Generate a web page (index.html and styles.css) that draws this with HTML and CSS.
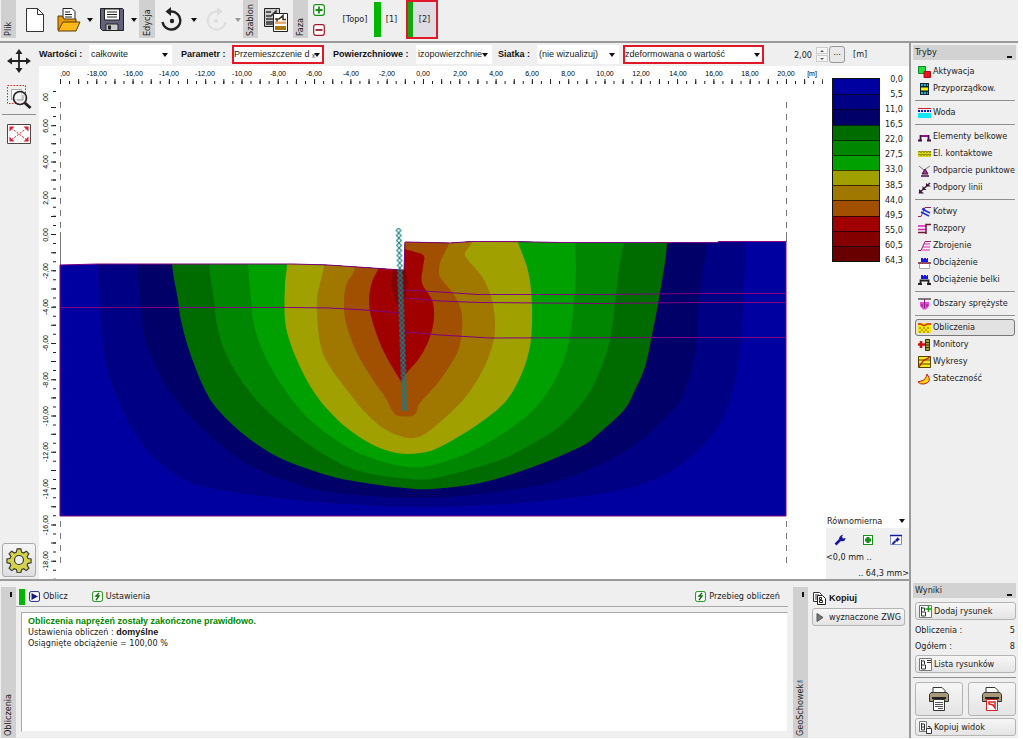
FILE: index.html
```html
<!DOCTYPE html>
<html lang="pl">
<head>
<meta charset="utf-8">
<title>Analiza MES</title>
<link rel="stylesheet" href="styles.css">
</head>
<body>
<div class="app">
  <header class="topbar">
    <div class="strip">Plik</div>
    <button class="tool w38" aria-label="Nowy"><svg width="20" height="26" viewBox="0 0 20 26"><path d="M1.500 1.500h11l6 6v17h-17z" fill="#fff" stroke="#333"/><path d="M12.500 1.500v6h6" fill="none" stroke="#333"/></svg></button>
    <button class="tool w30" aria-label="Otwórz"><svg width="26" height="26" viewBox="0 0 26 26"><path d="M7 12V1.500h9l3 3V14z" fill="#fff" stroke="#222"/><path d="M9 5h5M9 7.500h7M9 10h7" stroke="#222"/><path d="M2 23V9h4l2 3h12v3" fill="#e89a00" stroke="#5a3a00"/><path d="M2 24l5-9h17l-4 9z" fill="#ffb818" stroke="#5a3a00"/></svg></button>
    <button class="arrow" aria-label="Otwórz – lista"></button>
    <button class="tool w33" aria-label="Zapisz"><svg width="26" height="26" viewBox="0 0 26 26"><path d="M1.500 1.500h22l1 1v21h-21l-2-2z" fill="#62627c" stroke="#20202c"/><path d="M5.500 2h15v11h-15z" fill="#fff" stroke="#222"/><path d="M8 5h10M8 7.500h10M8 10h10" stroke="#222"/><path d="M7 17h12v6.500H7z" fill="#ccc" stroke="#222"/><path d="M9 18.500h3v4H9z" fill="#222"/></svg></button>
    <button class="arrow" aria-label="Zapisz – lista"></button>
    <div class="strip wide">Edycja</div>
    <button class="tool w33" aria-label="Cofnij"><svg width="24" height="26" viewBox="0 0 24 26"><path d="M2.500 15a9 9 0 1 0 9-10.500H8" fill="none" stroke="#222" stroke-width="2.400"/><path d="M11 0v9L5.500 4.500z" fill="#222"/><circle cx="12" cy="14" r="2.200" fill="#222"/></svg></button>
    <button class="arrow" aria-label="Cofnij – lista"></button>
    <button class="tool w33" aria-label="Ponów" disabled><svg width="24" height="26" viewBox="0 0 24 26"><path d="M21.500 15a9 9 0 1 1-9-10.500H16" fill="none" stroke="#ddd" stroke-width="2"/><path d="M13 0v9l5.500-4.500z" fill="#ddd"/><circle cx="12" cy="14" r="2" fill="#ddd"/></svg></button>
    <button class="arrow dim" aria-label="Ponów – lista"></button>
    <div class="strip">Szablon</div>
    <button class="tool w35" aria-label="Szablon"><svg width="26" height="26" viewBox="0 0 26 26"><path d="M1.500 1.500h15v18h-15z" fill="#ccc" stroke="#222"/><path d="M3 5h5M3 9h5l5-5v5M3 12h7M3 15h7M3 17h7" fill="none" stroke="#333" stroke-width="1.500"/><path d="M10.500 6.500h14v18h-14z" fill="#fff" stroke="#222"/><path d="M12 12h4l4-3.500v4h3M14 15v-3" fill="none" stroke="#432" stroke-width="1.500"/><path d="M12 14.500h11v2.500H12z" fill="#e8a870"/><path d="M12 19h11v4H12z" fill="#a87810"/></svg></button>
    <div class="strip">Faza</div>
    <div class="phase-edit">
      <button class="mini" aria-label="Dodaj fazę"><svg width="12" height="12" viewBox="0 0 12 12"><rect x=".7" y=".7" width="10.600" height="10.600" rx="2" fill="#fff" stroke="#169016" stroke-width="1.200"/><path d="M6 2.500v7M2.500 6h7" stroke="#169016" stroke-width="1.800"/></svg></button>
      <button class="mini" aria-label="Usuń fazę"><svg width="12" height="12" viewBox="0 0 12 12"><rect x=".7" y=".7" width="10.600" height="10.600" rx="2" fill="#fff" stroke="#a01828" stroke-width="1.200"/><path d="M2.500 6h7" stroke="#a01828" stroke-width="1.800"/></svg></button>
    </div>
    <button class="phase topo">[Topo]</button>
    <button class="phase one">[1]</button>
    <button class="phase two">[2]</button>
  </header>

  <div class="left">
    <section class="work">
      <nav class="tools">
        <button class="tbtn" aria-label="Przesuń"><svg width="26" height="26" viewBox="0 0 26 26"><path d="M13 3v20M3 13h20" stroke="#222" stroke-width="1.800"/><path d="M13 1l3.500 5h-7zM13 25l3.500-5h-7zM1 13l5-3.500v7zM25 13l-5-3.500v7z" fill="#222"/></svg></button>
        <button class="tbtn zoom" aria-label="Powiększ"><svg width="26" height="26" viewBox="0 0 26 26"><path d="M1.500 1.500h18v18h-18z" fill="none" stroke="#e02020" stroke-dasharray="1.500 1.500"/><path d="M5.500 5.500h10v10h-10z" fill="#fff" stroke="#aaa"/><circle cx="14" cy="14" r="6.500" fill="#eee" fill-opacity=".7" stroke="#222" stroke-width="1.600"/><path d="M11 16h6v-5" fill="none" stroke="#999"/><path d="M19 19l5.500 5" stroke="#222" stroke-width="3"/></svg></button>
        <hr>
        <button class="tbtn" aria-label="Pokaż wszystko"><svg width="26" height="22" viewBox="0 0 26 22"><path d="M1.500 1.500h23v19h-23z" fill="#fff" stroke="#554444"/><path d="M5 5l16 12M21 5L5 17" stroke="#e02030" stroke-dasharray="2 1.500"/><path d="M3.500 3.500h5l-5 5zM22.500 3.500h-5l5 5zM3.500 18.500h5l-5-5zM22.500 18.500h-5l5-5z" fill="#e02030"/></svg></button>
        <button class="gear" aria-label="Ustawienia widoku"><svg width="26" height="26" viewBox="-14 -14 28 28"><path d="M-2-12h4l.8 3.500 2.200 1 2.900-2 2.800 2.800-2 2.800 1 2.300 3.300.6v4l-3.300.6-1 2.200 2 2.900-2.800 2.700-2.900-2-2.200.9-.8 3.400h-4l-.8-3.400-2.200-.9-2.900 2-2.800-2.700 2-2.900-1-2.200L-13 3v-4l3.300-.6 1-2.300-2-2.800 2.800-2.800 2.900 2 2.200-1z" fill="#d4d44c" stroke="#333" stroke-width="1.200"/><circle r="4.800" fill="#eee" stroke="#333" stroke-width="1.200"/></svg></button>
      </nav>

      <div class="options">
        <label for="o1">Wartości :</label>
        <span class="sel"><select id="o1"><option>całkowite</option></select></span>
        <label for="o2">Parametr :</label>
        <span class="sel hot"><select id="o2"><option>Przemieszczenie d ₓ</option></select></span>
        <label for="o3">Powierzchniowe :</label>
        <span class="sel"><select id="o3"><option>izopowierzchnie</option></select></span>
        <label class="near" for="o4">Siatka :</label>
        <span class="sel"><select id="o4"><option>(nie wizualizuj)</option></select></span>
        <span class="sel hot deform"><select id="o5" aria-label="Deformacja"><option>zdeformowana o wartość</option></select></span>
        <input class="num" value="2,00" aria-label="Wartość">
        <span class="spin"><button aria-label="Więcej"></button><button aria-label="Mniej" class="down"></button></span>
        <button class="more">...</button>
        <span class="unit">[m]</span>
      </div>

      <svg class="plot" viewBox="39 66 784 513" preserveAspectRatio="xMinYMin meet" role="img" aria-label="Przemieszczenie dx">
        <defs>
          <clipPath id="soil"><path id="ground" d="M60 265L98 264H293L328 265 365 267.500 401 270 404 270 405 242 450 243 472 241.500 508 241.500 560 242.500 717 242.500 719 241.500 786 241.500V516H60z"/></clipPath>
          <clipPath id="cx"><path d="M60 66h763v16H60z"/></clipPath>
          <clipPath id="cy"><path d="M39 93h16v9H39zM39 112h16v460H39z"/></clipPath>
          <pattern id="links" width="6" height="5" patternUnits="userSpaceOnUse" x="395.500" y="228"><path d="M3 0L5.500 2.500 3 5 .5 2.500z" fill="none" stroke="#108484" stroke-width="1"/></pattern>
        </defs>
        <path class="bg" d="M39 66h784v513H39z"/>
        <g class="ticks">
          <path d="M60 81.500H823" stroke-width="5" stroke-dasharray="1 17.150"/>
          <path d="M69 82.500H823" stroke-width="3" stroke-dasharray="1 8.075"/>
          <path d="M53.500 107V579" stroke-width="5" stroke-dasharray="1 17.150"/>
          <path d="M54.500 116V579" stroke-width="3" stroke-dasharray="1 8.075"/>
          <path d="M53 91.500h3"/>
        </g>
        <g class="num-x" clip-path="url(#cx)">
          <text x="60" y="76">-20,00</text><text x="97" y="76">-18,00</text><text x="133" y="76">-16,00</text><text x="169" y="76">-14,00</text><text x="205" y="76">-12,00</text><text x="242" y="76">-10,00</text><text x="278" y="76">-8,00</text><text x="314" y="76">-6,00</text><text x="351" y="76">-4,00</text><text x="387" y="76">-2,00</text><text x="423" y="76">0,00</text><text x="460" y="76">2,00</text><text x="496" y="76">4,00</text><text x="532" y="76">6,00</text><text x="568" y="76">8,00</text><text x="605" y="76">10,00</text><text x="641" y="76">12,00</text><text x="678" y="76">14,00</text><text x="714" y="76">16,00</text><text x="750" y="76">18,00</text><text x="786" y="76">20,00</text><text x="812" y="76">[m]</text>
        </g>
        <g clip-path="url(#cy)"><g class="num-y" transform="rotate(-90)">
          <text x="-100" y="48">8,00</text><text x="-126" y="48">6,00</text><text x="-162" y="48">4,00</text><text x="-198" y="48">2,00</text><text x="-235" y="48">0,00</text><text x="-271" y="48">-2,00</text><text x="-307" y="48">-4,00</text><text x="-343" y="48">-6,00</text><text x="-380" y="48">-8,00</text><text x="-416" y="48">-10,00</text><text x="-452" y="48">-12,00</text><text x="-489" y="48">-14,00</text><text x="-525" y="48">-16,00</text><text x="-561" y="48">-18,00</text>
        </g></g>
        <path class="edge" d="M60.500 102V232M786.500 102V232M60.500 521V566M786.500 521V566" stroke-dasharray="6 6"/>
        <path class="edge" d="M60.500 232V265M786.500 232V242"/>
        <g clip-path="url(#soil)">
          <path fill="#0000a0" d="M60 230h726v286H60z"/>
          <g id="bands"></g>
          <path fill="#840000" d="M393 268L391 285 397 305 404 300 408 285 406 270z"/>
        </g>
        <path class="line" d="M60 307.500H293L330 308 365 310 400 313M403 290L440 292 478 294.500H603L700 293.500H786M406 298L440 301 480 302.500 600 303.500 696 302.500H786M404 332L440 335 490 338 680 337.500H786"/>
        <use href="#ground" class="line"/>
        <path d="M397 270h6l4 140h-5z" fill="#3c5a80" fill-opacity=".35"/>
        <g transform="translate(-8 0) skewX(2)"><path d="M395.500 228h6v183h-6z" fill="url(#links)"/></g>
      </svg>

      <aside class="legend">
        <div class="scale">
          <div class="swatches"><i class="c1"></i><i class="c2"></i><i class="c3"></i><i class="c4"></i><i class="c5"></i><i class="c6"></i><i class="c7"></i><i class="c8"></i><i class="c9"></i><i class="c10"></i><i class="c11"></i><i class="c12"></i></div>
          <div class="values"><span>0,0</span><span>5,5</span><span>11,0</span><span>16,5</span><span>22,0</span><span>27,5</span><span>33,0</span><span>38,5</span><span>44,0</span><span>49,5</span><span>55,0</span><span>60,5</span><span>64,3</span></div>
        </div>
        <div class="range">
          <span class="sel"><select aria-label="Skala"><option>Równomierna</option></select></span>
          <div class="range-icons">
            <button class="mini" aria-label="Edytuj"><svg width="12" height="12" viewBox="0 0 12 12"><path d="M1.500 10.500l5-5" stroke="#1818a0" stroke-width="2.600"/><path d="M5 5Q5 2 9 .5L8 3l1 1.500 2.500-.5Q11 8 7 7z" fill="#1818a0"/></svg></button>
            <button class="mini" aria-label="Dodaj"><svg width="12" height="12" viewBox="0 0 12 12"><rect x="1.500" y="1.500" width="9" height="9" fill="#fff" stroke="#169016"/><path d="M6 3v6M3 6h6" stroke="#169016" stroke-width="3"/></svg></button>
            <button class="mini" aria-label="Opcje skali"><svg width="12" height="12" viewBox="0 0 12 12"><path d="M.5 1.500h11v9H.5z" fill="#fff" stroke="#8090d0"/><path d="M0 1.500h12" stroke="#1818a0" stroke-width="1.500"/><path d="M2.500 10l3-3" stroke="#1818a0" stroke-width="2"/><path d="M5 6l3-3 .5 1.500L10 5 7 8z" fill="#1818a0"/></svg></button>
          </div>
          <div>&lt;0,0 mm ..</div>
          <div class="to">.. 64,3 mm&gt;</div>
        </div>
      </aside>
    </section>

    <section class="bottom">
      <div class="strip tall"><b class="pin"></b>Obliczenia</div>
      <div class="calc">
        <div class="calc-bar">
          <span class="mark"></span>
          <button class="flat"><svg width="11" height="11" viewBox="0 0 11 11"><rect x=".6" y=".6" width="9.800" height="9.800" rx="1.500" fill="#fff" stroke="#202080"/><path d="M2.500 2l6.500 3.500L2.500 9z" fill="#181880"/></svg>Oblicz</button>
          <button class="flat second"><svg width="11" height="11" viewBox="0 0 11 11"><rect x=".6" y=".6" width="9.800" height="9.800" rx="1.500" fill="#fff" stroke="#169016"/><path d="M7 2L4 5h3L4 9" fill="none" stroke="#107010" stroke-width="1.400"/></svg>Ustawienia</button>
          <button class="flat last"><svg width="11" height="11" viewBox="0 0 11 11"><rect x=".6" y=".6" width="9.800" height="9.800" rx="1.500" fill="#fff" stroke="#169016"/><path d="M7 2L4 5h3L4 9" fill="none" stroke="#107010" stroke-width="1.400"/></svg>Przebieg obliczeń</button>
        </div>
        <div class="log">
          <p class="ok">Obliczenia naprężeń zostały zakończone prawidłowo.</p>
          <p>Ustawienia obliczeń : <b>domyślne</b></p>
          <p>Osiągnięte obciążenie = 100,00 %</p>
        </div>
      </div>
      <div class="strip tall"><b class="pin"></b>GeoSchowek™</div>
      <div class="clip">
        <div class="clip-title"><svg width="13" height="13" viewBox="0 0 13 13"><path d="M.5.5h6l2 2v7h-8z" fill="#fff" stroke="#333"/><path d="M2 3h4M2 5h4M2 7h4" stroke="#333"/><path d="M4.500 3.500h5l3 3v6h-8z" fill="#fff" stroke="#222"/><path d="M6.500 5.500h2v2h-2zM6.500 8.500h3v2h-3z" fill="none" stroke="#222"/></svg><b>Kopiuj</b></div>
        <button class="btn"><svg width="8" height="9" viewBox="0 0 8 9"><path d="M1 .5l6 4-6 4z" fill="#777" stroke="#555"/></svg>wyznaczone ZWG</button>
      </div>
    </section>
  </div>

  <aside class="side">
    <h2>Tryby<i></i></h2>
    <nav class="modes">
      <button><svg viewBox="0 0 13 12"><path d="M.5.500h7v7h-7z" fill="#20e040" stroke="#118822"/><path d="M6 5.500h6.500v6H6z" fill="#f01020" stroke="#a01010"/></svg>Aktywacja</button>
      <button><svg viewBox="0 0 13 12"><path d="M2 0h9v12H2z" fill="#123"/><path d="M3 1h7v2H3zM3 9h7v2H3z" fill="#20b8c0"/><path d="M5 1h1v2H5zM8 1h1v2H8zM5 9h1v2H5zM8 9h1v2H8z" fill="#123"/><path d="M3 4.500h7v3H3z" fill="#f8f000"/></svg>Przyporządkow.</button>
      <hr>
      <button><svg viewBox="0 0 13 12"><path d="M0 1.500h13" stroke="#d02020"/><path d="M0 4h13" stroke="#1010d0" stroke-width="2" stroke-dasharray="2 1"/><path d="M0 6h13v5H0z" fill="#10e8f8"/></svg>Woda</button>
      <hr>
      <button><svg viewBox="0 0 13 12"><path d="M2.500 9.500V5h8v4.500M0 9.500h4M9 9.500h4" fill="none" stroke="#401040" stroke-width="1.800"/><path d="M3 5h7" stroke="#901090" stroke-width="2"/></svg>Elementy belkowe</button>
      <button><svg viewBox="0 0 13 12"><path d="M0 3h13v6H0z" fill="#d8d820"/><path d="M0 4.500l1.500-1.500L3 4.500 4.500 3 6 4.500 7.500 3 9 4.500 10.500 3 12 4.500 13 3M0 7.500L1.500 6 3 7.500 4.500 6 6 7.500 7.500 6 9 7.500 10.500 6 12 7.500 13 6" fill="none" stroke="#666600"/></svg>El. kontaktowe</button>
      <button><svg viewBox="0 0 13 12"><path d="M1 1l5 4 6-4" fill="none" stroke="#777"/><path d="M7 4l3 5H4z" fill="#b030a0" stroke="#401040"/><path d="M3 11h8" stroke="#401040" stroke-width="1.500"/></svg>Podparcie punktowe</button>
      <button><svg viewBox="0 0 13 12"><path d="M1 11L12 1" stroke="#402040" stroke-width="1.500"/><path d="M1 7l5 4.500H1zM4.500 4l4 4h-4zM8 1l5 3.500H8z" fill="#401838"/></svg>Podpory linii</button>
      <hr>
      <button><svg viewBox="0 0 13 12"><path d="M0 10.500h3L7 1.500h6" fill="none" stroke="#902060"/><path d="M4 3l8 4M3 6l8 4M5 2l3 3" stroke="#2030d8" stroke-width="1.400"/></svg>Kotwy</button>
      <button><svg viewBox="0 0 13 12"><path d="M0 3h8M0 6.500h8" stroke="#e018c0" stroke-width="1.500"/><path d="M0 9.500h8M8 11V1.500h5" fill="none" stroke="#701830" stroke-width="1.500"/></svg>Rozpory</button>
      <button><svg viewBox="0 0 13 12"><path d="M0 10.500h3L7 1.500h6" fill="none" stroke="#902060"/><path d="M6 4h6M5 7h7M4 10h8" stroke="#e020c0" stroke-width="1.200"/></svg>Zbrojenie</button>
      <button><svg viewBox="0 0 13 12"><path d="M3 1h2v1h1V1h2v1h1V1h1v4H3z" fill="#1818e0"/><path d="M0 6h13" stroke="#701830" stroke-width="1.500"/><path d="M1.500 7v4.500h10V7" fill="#fff" stroke="#aaa"/></svg>Obciążenie</button>
      <button><svg viewBox="0 0 13 12"><path d="M3 1h2v1h1V1h2v1h1V1h1v4H3z" fill="#1818e0"/><path d="M2.500 10V6.500h8V10M0 10h4M9 10h4" fill="none" stroke="#222" stroke-width="1.800"/></svg>Obciążenie belki</button>
      <hr>
      <button><svg viewBox="0 0 13 12"><path d="M0 1h13" stroke="#555" stroke-width="1.500"/><path d="M2 4h9v4l-3 3.500H5L2 8z" fill="#e848d8"/><path d="M6.500 1v9M4 6v3M9 6v3" stroke="#802080"/></svg>Obszary sprężyste</button>
      <hr>
      <button class="on"><svg viewBox="0 0 13 12"><path d="M0 1h13v10H0z" fill="#f8e800"/><path d="M0 2h3q3 3 6 0h4" fill="none" stroke="#d02020" stroke-width="1.300"/><path d="M1 6h2M5 6h2M9 6h2M3 8h2M7 8h2M1 10h2M5 10h2M9 10h2" stroke="#806000"/></svg>Obliczenia</button>
      <button><svg viewBox="0 0 13 12"><path d="M3 2v7M0 5.500h7" stroke="#c81010" stroke-width="2.600"/><path d="M7.500.5h4v11h-4z" fill="#a8a020" stroke="#333300"/><path d="M8 3.500h3M8 6h3M8 8.500h3" stroke="#333300"/></svg>Monitory</button>
      <button><svg viewBox="0 0 13 12"><path d="M.5.500h12v11H.5z" fill="#f8e820" stroke="#554400"/><path d="M1 4h11M1 8h11" stroke="#554400"/><path d="M1 11l4-6 7-4" fill="none" stroke="#d01010" stroke-width="1.300"/></svg>Wykresy</button>
      <button><svg viewBox="0 0 13 12"><path d="M0 9l3-1q5-1 6-7 6 8-3 10-4 .5-6-2z" fill="#f8d810" stroke="#c81818"/></svg>Stateczność</button>
    </nav>
    <section class="results">
      <h2>Wyniki<i></i></h2>
      <button class="btn"><svg width="13" height="13" viewBox="0 0 13 13"><path d="M.5.500h12v12H.5z" fill="#fff" stroke="#777"/><path d="M2.500 2v9h4V7h-4M2.500 3h3v3" fill="none" stroke="#333"/><path d="M9.500 1v6M6.500 4h6" stroke="#10a010" stroke-width="1.600"/></svg>Dodaj rysunek</button>
      <div class="count"><span>Obliczenia :</span><span>5</span></div>
      <div class="count"><span>Ogółem :</span><span>8</span></div>
      <button class="btn"><svg width="13" height="13" viewBox="0 0 13 13"><path d="M.5.500h12v12H.5z" fill="#fff" stroke="#777"/><path d="M2.500 2v9h4V7h-4M2.500 3h3v3M8 2.500h4M8 4.500h4" fill="none" stroke="#333"/></svg>Lista rysunków</button>
      <hr>
      <div class="printers">
        <button class="btn" aria-label="Drukuj"><svg width="22" height="26" viewBox="0 0 22 26"><path d="M5 8V1.500h9l3 3V8" fill="#fff" stroke="#333"/><path d="M3 6.500h16l1.500 2v7h-19v-7z" fill="#a89878" stroke="#333"/><path d="M4 12h14" stroke="#222" stroke-width="2"/><path d="M5.500 13.500h11v11h-11z" fill="#fff" stroke="#333"/><path d="M7 16.500h8M7 18.500h8M7 20.500h8M10 22.500h5" stroke="#555"/></svg></button>
        <button class="btn" aria-label="Drukuj do PDF"><svg width="22" height="26" viewBox="0 0 22 26"><path d="M5 8V1.500h9l3 3V8" fill="#fff" stroke="#333"/><path d="M3 6.500h16l1.500 2v7h-19v-7z" fill="#a89878" stroke="#333"/><path d="M4 12h14" stroke="#222" stroke-width="2"/><path d="M5.500 13.500h11v11h-11z" fill="#fff" stroke="#d02020"/><path d="M8 16h6v6l-2-3-4-1z" fill="none" stroke="#e02020" stroke-width="1.500"/></svg></button>
      </div>
      <button class="btn"><svg width="13" height="13" viewBox="0 0 13 13"><path d="M.5.500h7v10h-7z" fill="#fff" stroke="#777"/><path d="M2.500 2v7h3V6h-3M2.500 3h3v3" fill="none" stroke="#333"/><path d="M7.500 7.500h5v5h-5zM9 5.500h2v2" fill="#fff" stroke="#333"/></svg>Kopiuj widok</button>
    </section>
  </aside>
</div>
<script src="bands.js"></script>
</body>
</html>
```
FILE: bands.js
```javascript
// Isosurface outlines, from the outer band to the inner one: colour and the points of the boundary.
const bands = [
  ["#000084", "98,230 98,264 101,320 106,365 117,397 133,430 157,460 197,485 270,497 330,503 410,507 490,505 560,499 633,487 683,463 718,427 733,390 741,340 743,300 746,242 746,230"],
  ["#000068", "137,230 137,264 140,300 143,330 153,360 172,395 206,432 247,464 290,482 330,492 410,498 480,494 560,480 622,453 657,426 682,397 695,353 698,310 702,280 707,242 707,230"],
  ["#006c00", "172,230 172,264 178,300 181,320 189,350 205,390 220,412 247,437 280,458 330,476 372,484 405,488 430,489 480,483 530,468 580,447 597,435 624,410 635,390 645,367 651,340 658,304 665,262 667,242 667,230"],
  ["#008600", "209,230 209,264 214,300 217,325 226,354 243,383 265,409 297,436 330,458 363,472 410,479 440,477 497,461 530,445 560,426 585,399 600,371 610,340 615,303 620,263 624,242 624,230"],
  ["#00a000", "248,230 248,264 251,300 254,325 264,354 283,387 304,414 330,436 363,455 407,467 440,463 480,447 522,420 547,393 562,365 570,336 574,300 576,270 575,242 575,230"],
  ["#a0a000", "287,230 287,264 285,285 285,320 291,345 303,373 316,395 330,412 347,428 373,445 397,453 420,453 440,447 477,425 506,401 522,373 530,346 532,320 531,290 527,267 518,242 518,230"],
  ["#a07800", "324,230 324,265 317,300 320,343 330,367 347,390 363,410 383,428 403,437 418,437 433,428 463,400 483,370 493,343 495,323 492,300 483,278 468,260 465,253 472,242 472,230"],
  ["#a05000", "355,230 355,267 347,283 344,300 346,323 357,353 373,380 385,397 393,412 399,416 412,416 417,411 420,403 440,380 457,353 462,330 461,310 453,293 440,277 440,263 445,252 449,243 449,230"],
  ["#a00000", "378,260 378,269 372,282 369,300 372,320 383,350 400,380 402,382 405,375 420,357 430,337 434,317 432,300 422,283 423,267 424,256 415,252 404,249 403,249 401,260"]
];

// A Catmull-Rom curve through the points, written as cubic Béziers.
function smooth(text) {
  const p = text.split(" ").map(s => s.split(",").map(Number));
  let d = "M" + p[0];
  for (let i = 0; i < p.length - 1; i++) {
    const a = p[Math.max(i - 1, 0)], b = p[i], c = p[i + 1], e = p[Math.min(i + 2, p.length - 1)];
    d += "C" + [b[0] + (c[0] - a[0]) / 6, b[1] + (c[1] - a[1]) / 6,
      c[0] - (e[0] - b[0]) / 6, c[1] - (e[1] - b[1]) / 6, c[0], c[1]];
  }
  return d + "Z";
}

for (const [fill, points] of bands) {
  const path = document.createElementNS("http://www.w3.org/2000/svg", "path");
  path.setAttribute("fill", fill);
  path.setAttribute("d", smooth(points));
  document.getElementById("bands").append(path);
}
```
FILE: styles.css
```css
* { box-sizing: border-box; }
body {
  margin: 0;
  background: #fff;
  color: #222;
  font: 9px/11px "DejaVu Sans Condensed", "Liberation Sans", sans-serif;
}
button, select, input { font: inherit; color: inherit; margin: 0; padding: 0; border: 0; border-radius: 0; background: none; }
button { display: flex; align-items: center; justify-content: center; white-space: nowrap; }
svg { display: block; flex: none; }
b, label { font-family: "Liberation Sans", sans-serif; font-weight: bold; color: #111; }
p, h2 { margin: 0; font-size: inherit; font-weight: normal; }
hr { width: 100%; height: 1px; margin: 0; border: 0; background: #909090; }

.app {
  display: grid;
  grid-template: 43px 1fr / 1fr 109px;
  height: 100vh;
  padding: 0 5px 1px 0;
}
.topbar {
  grid-column: 1 / -1;
  display: flex;
  align-items: stretch;
  padding: 0 0 2px 1px;
  background: #efefef;
  border-bottom: 2px solid #9a9a9a;
}
.strip {
  display: flex;
  align-items: center;
  width: 15px;
  height: 38px;
  background: #d0d0d0;
  writing-mode: vertical-rl;
  transform: rotate(180deg);
  padding: 2px 0;
  white-space: nowrap;
}
.strip.wide { width: 16px; }
.tool { height: 39px; }
.w30 { width: 30px; }
.w33 { width: 33px; }
.w35 { width: 35px; }
.w38 { width: 38px; }
.arrow { width: 11px; }
.arrow::after, .sel::after { content: ""; border: 3px solid transparent; border-top: 4px solid #111; border-bottom: 0; }
.arrow.dim::after { border-top-color: #999; }
.phase-edit { display: flex; flex-direction: column; gap: 8px; padding: 4px 4px 4px 5px; }
.mini { width: 12px; height: 12px; }
.phase { height: 38px; }
.topo { width: 36px; margin: 0 1px 0 8px; }
.one { width: 28px; height: 35px; margin-top: 2px; border-left: 7px solid #00b800; }
.two { width: 32px; margin-left: 4px; height: 39px; border: 2px solid #e01828; background: linear-gradient(90deg, #10a810 5px, #dcdce2 5px); padding-left: 5px; }

.left { display: grid; grid-template-rows: 1fr 159px; min-width: 0; min-height: 0; }
.work { display: grid; grid-template: 23px 1fr / 39px 1fr 86px; min-height: 0; background: #fff; }
.tools {
  grid-row: 1 / 3;
  display: flex;
  flex-direction: column;
  align-items: center;
  padding: 5px 3px 2px 2px;
  background: #efefef;
}
.tools hr { margin: 4px 0 8px; }
.zoom { margin-top: 10px; }
.gear { width: 34px; height: 34px; margin-top: auto; border: 1px solid #aaa; border-radius: 3px; background: linear-gradient(#f6f6f6, #dedede); }

.options {
  grid-column: 2 / 4;
  display: grid;
  grid-template-columns: 50px 83px 60px 92px 92px 76px 45px 82px 145px 49px 16px 16px 1fr;
  align-items: center;
  background: #efefef;
  white-space: nowrap;
}
.options > label + span + label { padding-left: 9px; }
.options > label.near { padding-left: 6px; }
.unit { padding-left: 8px; }
.sel { position: relative; display: block; background: #fff; }
.sel select { display: block; width: 100%; height: 19px; padding-left: 2px; appearance: none; outline: 0; }
.options .sel select { font-family: "Liberation Sans", "DejaVu Sans", sans-serif; }
.sel::after { position: absolute; right: 4px; top: 8px; pointer-events: none; }
.sel.hot { border: 2px solid #e01828; }
.sel.hot select { height: 15px; padding: 0; }
.sel.hot::after { top: 6px; right: 2px; }
.deform { margin-left: 4px; }
.num { width: 100%; height: 18px; padding-right: 1px; text-align: right; }
.spin { display: grid; gap: 1px; padding: 0 1px 0 3px; }
.spin button { height: 7px; border: 1px solid #ccc; background: #f5f5f5; }
.spin button::after { content: ""; border: 2px solid transparent; border-top: 0; border-bottom: 2px solid #556; }
.spin .down::after { border-top: 2px solid #556; border-bottom: 0; }
.more { height: 17px; border: 1px solid #999; border-radius: 3px; background: #e8e8e8; padding-bottom: 4px; }

.plot { width: 100%; height: 100%; font: 7px "Liberation Sans", sans-serif; text-anchor: middle; }
.bg { fill: #fff; }
.ticks path { stroke: #222; }
.edge { fill: none; stroke: #777; }
.line { fill: none; stroke: #800080; }

.legend { display: flex; flex-direction: column; justify-content: space-between; padding-left: 3px; min-height: 0; }
.scale { display: flex; padding: 5px 6px 0; }
.swatches { display: grid; grid-template-rows: repeat(12, 1fr); width: 48px; height: 184px; margin-top: 7px; border: 1px solid #111; }
.swatches i + i { border-top: 1px solid rgba(0, 0, 0, .65); }
.c1 { background: #0000a0; }
.c2 { background: #000084; }
.c3 { background: #000068; }
.c4 { background: #006c00; }
.c5 { background: #008600; }
.c6 { background: #00a000; }
.c7 { background: #a0a000; }
.c8 { background: #a07800; }
.c9 { background: #a05000; }
.c10 { background: #a00000; }
.c11 { background: #840000; }
.c12 { background: #680000; }
.values { display: flex; flex-direction: column; justify-content: space-between; flex: 1; height: 192px; text-align: right; margin-top: 3px; }
.range { display: flex; flex-direction: column; gap: 5px; background: #efefef; }
.range .sel select { height: 14px; padding-left: 1px; }
.range .sel::after { top: 5px; }
.range-icons { display: flex; gap: 16px; padding: 1px 8px; }
.to { text-align: right; }

.bottom { display: flex; padding: 6px 0 0 1px; border-top: 2px solid #9a9a9a; background: #efefef; }
.strip.tall { height: 100%; justify-content: space-between; flex-direction: row-reverse; padding: 2px 0 5px; }
.pin { width: 2px; height: 5px; margin-right: 6px; background: #111; }
.calc { flex: 1; display: flex; flex-direction: column; padding-right: 5px; }
.calc-bar { display: flex; align-items: center; height: 20px; padding: 0 8px 0 3px; border-bottom: 1px solid #aaa; }
.mark { width: 6px; height: 16px; background: #00b800; }
.flat { gap: 3px; margin-left: 4px; }
.second { margin-left: 24px; }
.last { margin-left: auto; }
.log { flex: 1; margin: 5px 0 6px 5px; padding: 3px 6px; border: 1px solid #aaa; border-right-color: #eee; border-bottom-color: #eee; background: #fff; }
.ok { font-family: "Liberation Sans", sans-serif; font-weight: bold; color: #008800; }
.clip { width: 101px; padding: 5px 4px; }
.clip-title { display: flex; align-items: center; gap: 3px; height: 13px; margin-bottom: 3px; padding-left: 1px; }
.btn { gap: 2px; width: 100%; height: 18px; padding: 0 3px; border: 1px solid #b4b4b4; border-radius: 3px; background: linear-gradient(#f6f6f6, #e4e4e4); }
.clip .btn { gap: 5px; }

.side { display: flex; flex-direction: column; min-width: 0; padding: 2px; border-left: 2px solid #9a9a9a; background: #efefef; }
.side h2 { display: flex; justify-content: space-between; align-items: end; height: 15px; padding: 2px; background: #d2d2d2; }
.side h2 i { width: 5px; height: 2px; margin: 0 2px 0 0; background: #111; }
.modes { padding: 3px 1px 0 2px; }
.modes button { justify-content: flex-start; gap: 2px; width: 100%; height: 17px; padding-left: 2px; border: 1px solid transparent; border-radius: 3px; }
.modes svg { width: 13px; height: 12px; }
.modes .on { border-color: #777; background: #e2e2e2; }
.modes hr { margin: 3px 0; }
.results { display: flex; flex-direction: column; margin-top: auto; }
.results .btn { margin-left: 2px; width: auto; justify-content: flex-start; }
.results h2 { margin-bottom: 4px; }
.count { display: flex; justify-content: space-between; height: 16px; padding: 5px 1px 0 2px; }
.count + .btn { margin-top: 3px; }
.results hr { margin: 4px 0; }
.results .printers { display: grid; grid-template-columns: 1fr 1fr; gap: 3px; margin-bottom: 2px; }
.printers .btn { height: 34px; justify-content: center; }
```
